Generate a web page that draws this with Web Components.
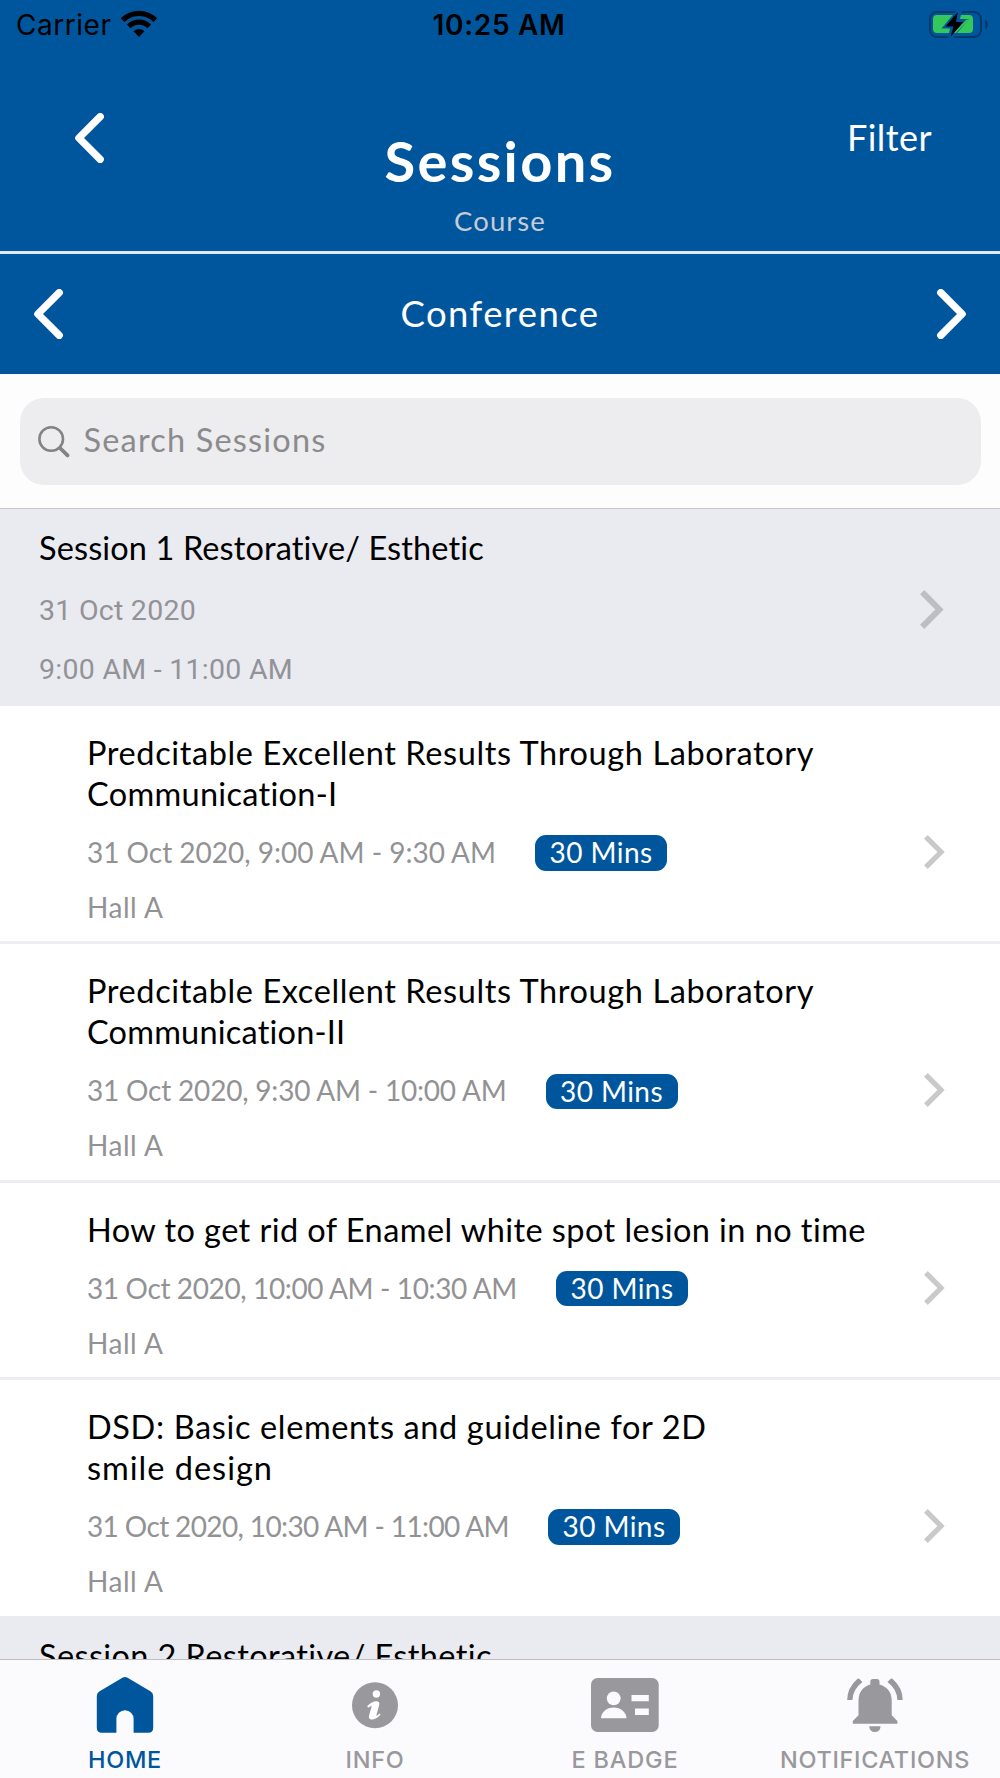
<!DOCTYPE html>
<html lang="en">
<head>
<meta charset="utf-8">
<title>Sessions</title>
<style>
  html, body { margin: 0; height: 1778px; overflow: hidden; background: #fff; }
  body { font-family: Lato, "Open Sans", sans-serif; color: #000; }
</style>
</head>
<body>
<conference-app></conference-app>
<script>
const define = (name, html, after) => {
  const tpl = document.createElement('template');
  tpl.innerHTML = html;
  customElements.define(name, class extends HTMLElement {
    constructor() {
      super();
      this.attachShadow({ mode: 'open' }).append(tpl.content.cloneNode(true));
    }
    connectedCallback() { if (after) after(this, this.shadowRoot); }
  });
};

/* One line of text whose tracking is adjusted so that it fills the width given in "fit". */
define('fit-text', `<style>
    :host { display: flex; width: max-content; white-space: nowrap; }
    span { display: block; }
  </style><span><slot></slot></span>`,
  (host, root) => {
    const span = root.querySelector('span');
    const run = () => {
      const target = parseFloat(host.getAttribute('fit'));
      const count = host.textContent.length;
      if (!target || !count) return;
      span.style.letterSpacing = '0px';
      const natural = span.getBoundingClientRect().width;
      if (!natural) return;
      span.style.letterSpacing = ((target - natural) / count).toFixed(3) + 'px';
    };
    run();
    document.fonts.ready.then(run);
  });

define('nav-chevron', `
  <style>
    :host { display: block; width: 30px; height: 50px; }
    :host([dir="right"]) svg { transform: scaleX(-1); }
    svg { display: block; }
  </style>
  <svg width="30" height="50" viewBox="0 0 30 50"><path d="M25.2 3.7 3.9 25 25.2 46.3" fill="none" stroke="#fff" stroke-width="7.4" stroke-linecap="round" stroke-linejoin="round"/></svg>`);

define('row-chevron', `
  <style>:host { display: block; color: #c9c9c9; } svg { display: block; width: var(--w, 21px); height: var(--h, 34px); }</style>
  <svg viewBox="0 0 21 34" preserveAspectRatio="none"><path d="M1.9 1.9 17 17 1.9 32.1" fill="none" stroke="currentColor" stroke-width="5.2"/></svg>`);

define('status-bar', `
  <style>
    :host { display: grid; grid-template-columns: 1fr auto 1fr; height: 50px; padding: 0 11px; font-family: Inter, sans-serif; font-size: 28px; line-height: 51px; }
    .left { display: flex; gap: 8px; padding-left: 5px; }
    .time { font-weight: 600; margin-right: 2px; }
    .wifi { margin-top: 10px; }
    .battery { justify-self: end; margin-top: 10px; }
  </style>
  <div class="left">
    <fit-text fit="95.5">Carrier</fit-text>
    <svg class="wifi" width="38" height="28" viewBox="0 0 38 28">
      <g fill="none" stroke="#000" stroke-width="5.2">
        <path d="M2.6 10.2a23.2 23.2 0 0 1 32.8 0"/><path d="M8.7 16.4a14.6 14.6 0 0 1 20.6 0"/>
      </g>
      <path d="M13.6 21.3a7.6 7.6 0 0 1 10.8 0L19 27.1z"/>
    </svg>
  </div>
  <fit-text class="time" fit="133">10:25 AM</fit-text>
  <svg class="battery" width="60" height="29" viewBox="0 0 60 29">
    <rect x="1" y="2" width="51" height="25" rx="7" fill="none" stroke="#063a6b" stroke-width="2"/>
    <path d="M56 9.5c4 2 4 8 0 10z" fill="#063a6b"/>
    <rect x="4" y="5" width="40" height="18" rx="4" fill="#34c759"/>
    <path d="M28 0 12.500 18.500h8.500L19 29H23L40 9H31L33 0z" fill="#00569d"/>
    <path d="M37.500 9.500h2.500L27 23h-2.500z" fill="#34c759"/>
    <path d="M28.700 2 16.500 16.500h8L21.500 27 34.300 11.900h-7.200z" fill="#000"/>
  </svg>`);

define('page-header', `
  <style>
    :host { display: block; height: 251px; background: #00569d; border-bottom: 3px solid #dfe9f3; box-sizing: content-box; }
    nav { display: grid; grid-template-columns: 1fr auto 1fr; height: 201px; color: #fff; }
    nav-chevron { margin: 63px 0 0 75px; }
    .title { display: flex; flex-direction: column; align-items: center; padding-top: 79px; }
    .main { font-size: 56px; font-weight: 700; line-height: 64px; }
    .sub { font-size: 27.5px; line-height: 36px; color: #c6ccd5; margin-top: 10px; }
    .filter { justify-self: end; margin: 65.5px 68px 0 0; font-size: 36px; line-height: 42px; }
  </style>
  <status-bar></status-bar>
  <nav>
    <nav-chevron></nav-chevron>
    <div class="title"><fit-text class="main" fit="231">Sessions</fit-text><fit-text class="sub" fit="92">Course</fit-text></div>
    <fit-text class="filter" fit="85">Filter</fit-text>
  </nav>`);

define('category-switcher', `
  <style>
    :host { display: flex; justify-content: space-between; align-items: center; height: 120px; padding: 0 34px; background: #00569d; color: #fff; font-size: 36.5px; line-height: 44px; }
    fit-text { margin-bottom: 2px; }
  </style>
  <nav-chevron></nav-chevron><fit-text fit="199"></fit-text><nav-chevron dir="right"></nav-chevron>`,
  (host, root) => {
    const el = root.querySelector('fit-text');
    el.textContent = host.getAttribute('data-label');
  });

define('search-box', `
  <style>
    :host { display: block; padding: 24px 19.5px 23px; background: #fdfdfe; border-bottom: 1px solid #c5c5ca; }
    .field { display: flex; height: 87px; border-radius: 24px; background: #ededef; color: #8b8b8e; font-size: 32.5px; }
    svg { margin: 27px 0 0 17px; }
    fit-text { line-height: 40px; margin: 22px 0 0 14px; }
  </style>
  <div class="field">
    <svg width="33" height="33" viewBox="0 0 33 33" fill="none" stroke="#838386"><circle cx="14.2" cy="14" r="11.8" stroke-width="2.6"/><path d="m22 22 2 2" stroke-width="2.6"/><path d="m23 23 7.5 7.4" stroke-width="3.8" stroke-linecap="round"/></svg>
    <fit-text fit="243">Search Sessions</fit-text>
  </div>`);

define('session-header', `
  <style>
    :host { display: flex; justify-content: space-between; align-items: center; flex: none; box-sizing: border-box; height: 197px; padding: var(--top, 0) 56px 0 39px; background: #eaebf0; }
    .title { font-size: 32.5px; line-height: 40px; }
    .when { color: #929297; font-family: Roboto, sans-serif; font-size: 28.5px; line-height: 36px; }
    .body { align-self: flex-start; padding-top: 19px; }
    .date { margin-top: 24.5px; } .time { margin-top: 23px; }
    row-chevron { color: #bdbdc4; --w: 24px; --h: 39px; margin-top: 3px; }
  </style>
  <div class="body">
    <fit-text class="title"></fit-text>
    <fit-text class="when date"></fit-text>
    <fit-text class="when time"></fit-text>
  </div>
  <row-chevron></row-chevron>`,
  (host, root) => {
    for (const k of ['title', 'date', 'time']) {
      const el = root.querySelector('.' + k);
      const [text, fit] = (host.getAttribute('data-' + k) || '').split('|');
      el.setAttribute('fit', fit || 0);
      el.textContent = text;
    }
  });

define('talk-row', `
  <style>
    :host { display: flex; justify-content: space-between; flex: none; padding: 26px 55px 16.3px 87px; border-bottom: 3px solid #eeeef2; background: #fff; }
    :host([last]) { border-bottom: 0; padding-bottom: 17px; }
    .title { font-size: 32.5px; line-height: 41px; }
    .meta { display: flex; align-items: center; gap: 39px; height: 36px; margin-top: 21px; font-size: 28px; line-height: 36px; color: #929295; }
    .when { margin-bottom: 2px; }
    .pill { display: flex; justify-content: center; box-sizing: border-box; width: 132px; height: 35.5px; border-radius: 11px; background: #00569d; color: #fff; line-height: 35px; }
    .hall { font-size: 28px; line-height: 36px; margin-top: 18px; color: #929295; }
    row-chevron { align-self: flex-start; margin-top: var(--chev); }
  </style>
  <div>
    <div class="titles"></div>
    <div class="meta"><fit-text class="when"></fit-text><div class="pill"><fit-text fit="103">30 Mins</fit-text></div></div>
    <fit-text class="hall" fit="76.5">Hall A</fit-text>
  </div>
  <row-chevron></row-chevron>`,
  (host, root) => {
    const lines = host.getAttribute('data-title').split('/');
    for (const line of lines) {
      const [text, fit] = line.split('|');
      const el = document.createElement('fit-text');
      el.className = 'title';
      el.setAttribute('fit', fit);
      el.textContent = text;
      root.querySelector('.titles').append(el);
    }
    const [text, fit] = host.getAttribute('data-when').split('|');
    const when = root.querySelector('.when');
    when.setAttribute('fit', fit);
    when.textContent = text;
    host.style.setProperty('--chev', (lines.length * 41 + 21) + 'px');
  });

define('tab-item', `
  <style>
    :host { display: flex; flex-direction: column; align-items: center; color: #99989c; font-family: Inter, sans-serif; font-size: 23.5px; line-height: 30px; font-weight: 500; }
    :host([active]) { color: #00569d; }
    .icon { height: 85px; display: flex; align-items: flex-start; }
    .icon ::slotted(svg) { display: block; margin-top: 14px; }
  </style>
  <div class="icon"><slot name="icon"></slot></div>
  <fit-text class="label"></fit-text>`,
  (host, root) => {
    const el = root.querySelector('.label');
    el.setAttribute('fit', host.getAttribute('data-fit'));
    el.textContent = host.getAttribute('data-label');
  });

define('tab-bar', `
  <style>
    :host { display: grid; grid-template-columns: repeat(4, 1fr); flex: none; height: 118px; border-top: 1.5px solid #bdbdc2; background: #fbfbfd; }
  </style>
  <tab-item active data-label="HOME" data-fit="74">
    <svg slot="icon" width="58" height="62" viewBox="96 1674 58 62"><path fill="#00569d" d="M122.4 1677.8q2.6-1.4 5.2 0l23.2 13.8q2.4 1.6 2.4 4.5v31.7q0 5-5 5h-14.6v-13.9a8.6 8.6 0 0 0-17.2 0v13.9h-14.6q-5 0-5-5v-31.7q0-2.9 2.4-4.5z"/></svg>
  </tab-item>
  <tab-item data-label="INFO" data-fit="59">
    <svg slot="icon" width="48" height="62" viewBox="351.3 1674 48 62"><circle cx="375.3" cy="1705.2" r="23" fill="#99989c"/><g fill="#fff"><circle cx="376.7" cy="1694" r="3.7"/><path d="M367.4 1706.2q5.4-5.4 9.800-5 3.200.3 2.200 4.300l-2.900 10.300q1.800-.5 3.500-2.200l.9.8q-4.500 5.200-9 5.100-3.500-.2-2.500-4.300l2.700-9.200q-1.700.3-3.500 1.700z"/></g></svg>
  </tab-item>
  <tab-item data-label="E BADGE" data-fit="107">
    <svg slot="icon" width="68" height="62" viewBox="591 1674 68 62"><rect x="591" y="1678" width="67.7" height="54" rx="6.5" fill="#99989c"/><g fill="#fbfbfd"><circle cx="613.7" cy="1698.3" r="6.9"/><path d="M601 1718.3q0-4.5 3.6-7.6 3.800-3.200 9.100-3.200t9.100 3.200q3.700 3.100 3.700 7.600zM631.500 1695h17.300v6.300h-17.300zM635 1708.400h13.800v6.600H635z"/></g></svg>
  </tab-item>
  <tab-item data-label="NOTIFICATIONS" data-fit="190">
    <svg slot="icon" width="56" height="62" viewBox="847.5 1674 56 62"><path fill="#99989c" d="M870.8 1684.5v-2.800q0-2.700 2.700-2.700h3.800q2.700 0 2.700 2.700v2.800q12.200 3.600 12.200 16.500v14.200l5.700 5.800v2.700h-44.600v-2.700l5.700-5.800V1701q0-12.900 11.800-16.500zM869.700 1726.200h11.400q-.5 5.800-5.700 5.800t-5.700-5.800zM847.700 1700q0-12.400 10.300-21.300q1-.7 2 .2l2.900 3.100q-9.700 7.500-9.900 18zM903.200 1700q0-12.400-10.300-21.300q-1-.7-2 .2l-2.900 3.100q9.700 7.500 9.900 18z"/></svg>
  </tab-item>`);

define('conference-app', `
  <style>
    :host { display: flex; flex-direction: column; width: 1000px; height: 1778px; overflow: hidden; }
    page-header, category-switcher, search-box { flex: none; }
    main { display: flex; flex-direction: column; flex: 1; min-height: 0; overflow: hidden; }
  </style>
  <page-header></page-header>
  <category-switcher data-label="Conference"></category-switcher>
  <search-box></search-box>
  <main>
    <session-header data-title="Session 1 Restorative/ Esthetic|446" data-date="31 Oct 2020|157" data-time="9:00 AM - 11:00 AM|254"></session-header>
    <talk-row data-title="Predcitable Excellent Results Through Laboratory|727/Communication-I|251" data-when="31 Oct 2020, 9:00 AM - 9:30 AM|409"></talk-row>
    <talk-row data-title="Predcitable Excellent Results Through Laboratory|727/Communication-II|259" data-when="31 Oct 2020, 9:30 AM - 10:00 AM|419.5"></talk-row>
    <talk-row data-title="How to get rid of Enamel white spot lesion in no time|779.5" data-when="31 Oct 2020, 10:00 AM - 10:30 AM|430"></talk-row>
    <talk-row last data-title="DSD: Basic elements and guideline for 2D|619.5/smile design|186" data-when="31 Oct 2020, 10:30 AM - 11:00 AM|422"></talk-row>
    <session-header style="--top: 1.5px" data-title="Session 2 Restorative/ Esthetic|454"></session-header>
  </main>
  <tab-bar></tab-bar>`);
</script>
</body>
</html>
